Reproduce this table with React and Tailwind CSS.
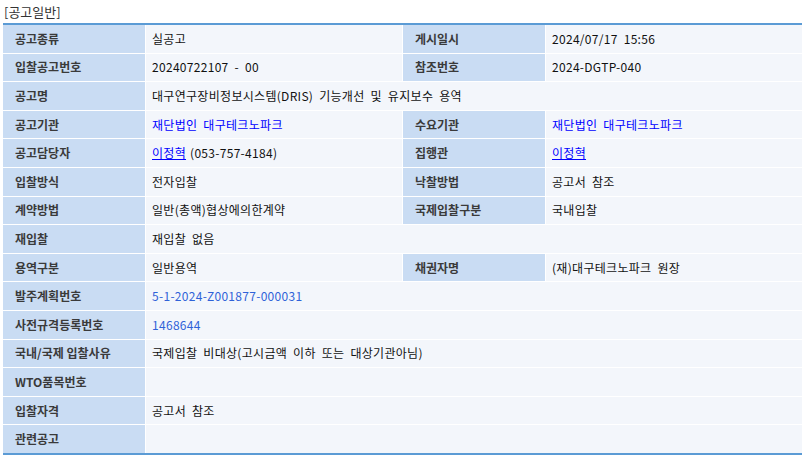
import React from "react";

const font = { fontFamily: '"Noto Sans CJK KR", "Noto Sans", sans-serif' };

function L({ children }) {
  return (
    <div className="bg-[#c9dcf3] flex items-center pl-[12px] text-[12px] font-bold text-[#3a3a3a] whitespace-nowrap">
      {children}
    </div>
  );
}
function V({ children, span }) {
  return (
    <div
      className={
        "bg-[#f3f6fb] flex items-center pl-[6px] text-[12px] text-[#111] whitespace-nowrap [word-spacing:3px] tracking-[0.3px] " +
        (span ? "col-span-3" : "")
      }
    >
      {children}
    </div>
  );
}

export default function App() {
  return (
    <div className="w-[806px] h-[458px] bg-white" style={font}>
      <div className="pl-[4px] pt-[3px] h-[23px] text-[13px] leading-[18px] text-[#333]">[공고일반]</div>
      <div className="mx-[3px] w-[799px] border-t-2 border-b-2 border-[#5b9bd5]">
        <div className="grid grid-cols-[142px_256px_142px_256px] auto-rows-[27.6px] gap-px bg-white">
          <L>공고종류</L>
          <V>실공고</V>
          <L>게시일시</L>
          <V>2024/07/17 15:56</V>

          <L>입찰공고번호</L>
          <V>20240722107 - 00</V>
          <L>참조번호</L>
          <V>2024-DGTP-040</V>

          <L>공고명</L>
          <V span>대구연구장비정보시스템(DRIS) 기능개선 및 유지보수 용역</V>

          <L>공고기관</L>
          <V><span className="text-[#0000ff]">재단법인 대구테크노파크</span></V>
          <L>수요기관</L>
          <V><span className="text-[#0000ff]">재단법인 대구테크노파크</span></V>

          <L>공고담당자</L>
          <V>
            <span className="text-[#0000ff] underline">이정혁</span>
            <span className="ml-[4px]">(053-757-4184)</span>
          </V>
          <L>집행관</L>
          <V><span className="text-[#0000ff] underline">이정혁</span></V>

          <L>입찰방식</L>
          <V>전자입찰</V>
          <L>낙찰방법</L>
          <V>공고서 참조</V>

          <L>계약방법</L>
          <V>일반(총액)협상에의한계약</V>
          <L>국제입찰구분</L>
          <V>국내입찰</V>

          <L>재입찰</L>
          <V span>재입찰 없음</V>

          <L>용역구분</L>
          <V>일반용역</V>
          <L>채권자명</L>
          <V>(재)대구테크노파크 원장</V>

          <L>발주계획번호</L>
          <V span><span className="text-[#2f62d8]">5-1-2024-Z001877-000031</span></V>

          <L>사전규격등록번호</L>
          <V span><span className="text-[#2f62d8]">1468644</span></V>

          <L>국내/국제 입찰사유</L>
          <V span>국제입찰 비대상(고시금액 이하 또는 대상기관아님)</V>

          <L>WTO품목번호</L>
          <V span></V>

          <L>입찰자격</L>
          <V span>공고서 참조</V>

          <L>관련공고</L>
          <V span></V>
        </div>
      </div>
    </div>
  );
}
